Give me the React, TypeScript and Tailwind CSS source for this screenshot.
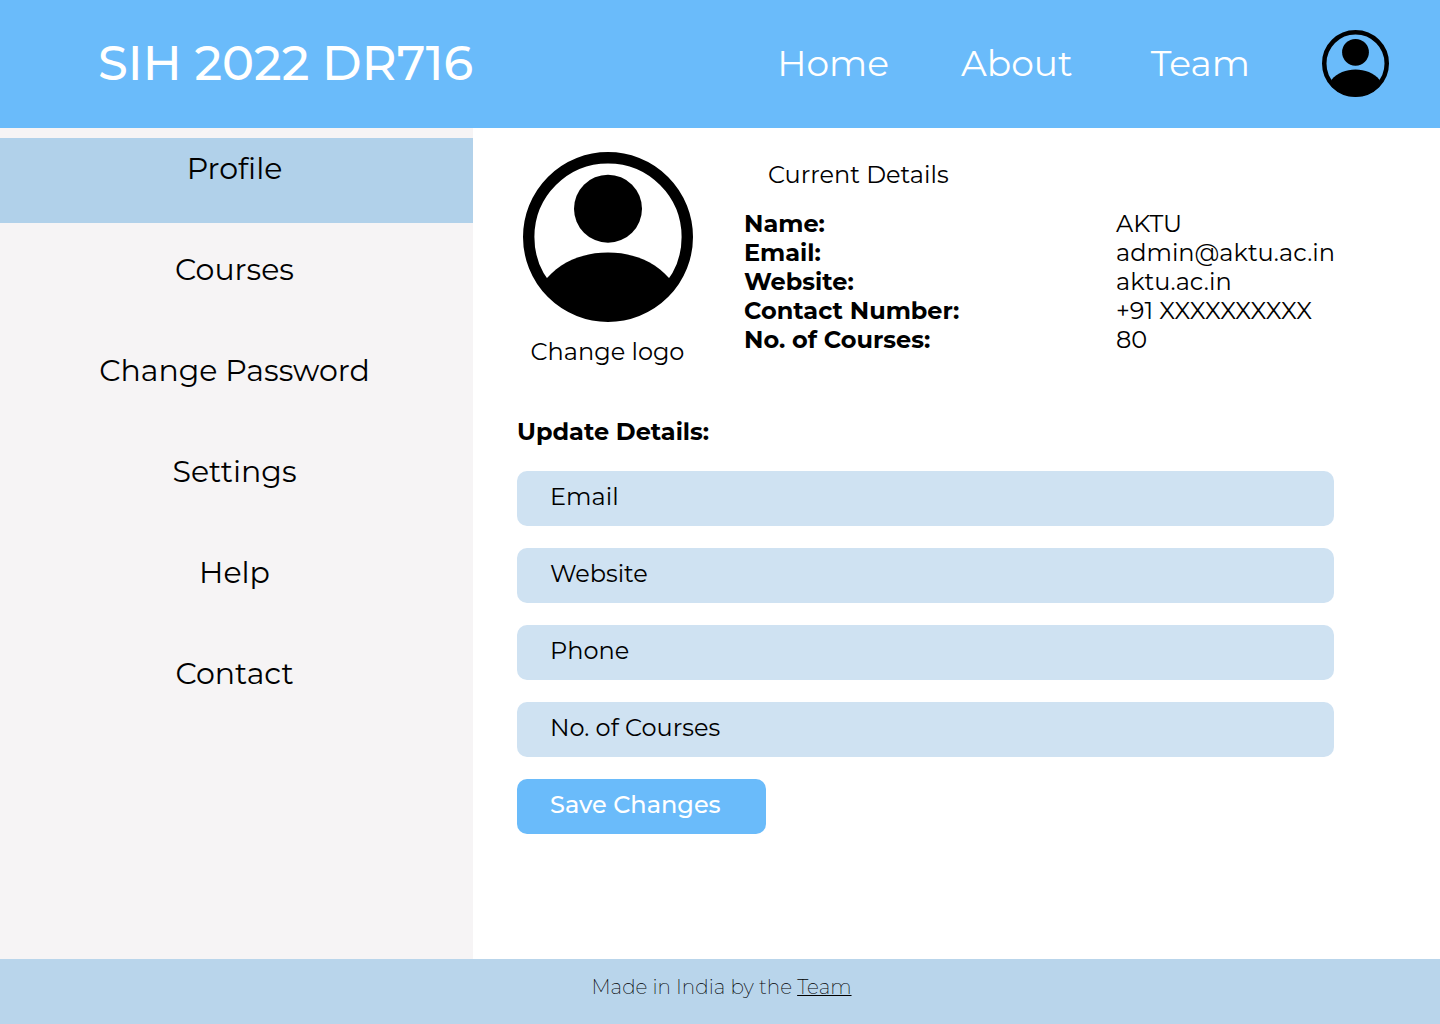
import React from "react";

function Avatar({ className }: { className: string }) {
  return (
    <svg viewBox="0 0 170 170" className={className} aria-hidden="true">
      <defs>
        <clipPath id="disc"><circle cx="85" cy="85" r="84" /></clipPath>
      </defs>
      <circle cx="85" cy="85" r="79.3" fill="none" stroke="#000" strokeWidth="11.4" />
      <circle cx="85" cy="56.7" r="34" />
      <path clipPath="url(#disc)" d="M24 126C39 109 61 100.500 85 100.500S131 109 146 126V170H24Z" />
    </svg>
  );
}

const menu = ["Profile", "Courses", "Change Password", "Settings", "Help", "Contact"];
const details = [
  ["Name:", "AKTU"],
  ["Email:", "admin@aktu.ac.in"],
  ["Website:", "aktu.ac.in"],
  ["Contact Number:", "+91 XXXXXXXXXX"],
  ["No. of Courses:", "80"],
];
const fields = ["Email", "Website", "Phone", "No. of Courses"];

export default function App() {
  return (
    <div className="flex min-h-screen flex-col bg-white font-['Montserrat','Inter',sans-serif] text-black [font-variant-ligatures:none]">
      <header className="flex h-32 items-center justify-between bg-[#6abbfa] pr-[51px] pb-0.5 pl-[98px] text-white">
        <h1 className="text-[48px] leading-none font-medium">SIH 2022 DR716</h1>
        <div className="flex items-center gap-[72px]">
          <nav className="flex items-center text-[36px]">
            <a href="#home" className="mr-[72px]">Home</a>
            <a href="#about" className="mr-[78px]">About</a>
            <a href="#team">Team</a>
          </nav>
          <button type="button" aria-label="Account"><Avatar className="size-[67px]" /></button>
        </div>
      </header>
      <div className="flex grow">
        <aside className="w-[473px] shrink-0 bg-[#f6f4f5] pt-[10px]">
          <nav className="flex flex-col gap-4 text-[30px]">
            {menu.map((m) => (
              <a key={m} href="#" className={m === "Profile" ? "flex h-[85px] justify-center bg-[#b1d1ea] pt-2 pr-1" : "flex h-[85px] justify-center pt-2 pr-1"}>{m}</a>
            ))}
          </nav>
        </aside>
        <main className="min-w-0 grow pt-6 pr-[106px] pl-11 text-[24px]">
          <div className="flex">
            <div className="flex w-[181px] shrink-0 flex-col items-center">
              <Avatar className="size-[170px]" />
              <button type="button" className="mt-3 whitespace-nowrap">Change logo</button>
            </div>
            <section className="ml-[46px] min-w-0 grow pt-[5px]">
              <h2 className="pl-6">Current Details</h2>
              <dl className="mt-4 leading-[29px]">
                {details.map(([k, v]) => (
                  <div key={k} className="flex"><dt className="w-[372px] shrink-0 font-bold">{k}</dt><dd className="whitespace-nowrap">{v}</dd></div>
                ))}
              </dl>
            </section>
          </div>
          <form className="mt-11 flex flex-col gap-[22px]">
            <h2 className="leading-[35px] font-bold">Update Details:</h2>
            {fields.map((f) => (
              <input key={f} aria-label={f} placeholder={f} className="h-[55px] rounded-[10px] bg-[#cfe2f2] px-[33px] pb-1 placeholder:text-black" />
            ))}
            <button type="button" className="h-[55px] w-[249px] rounded-[10px] bg-[#6abbfa] pb-1 pl-[33px] text-left font-medium text-white">Save Changes</button>
          </form>
        </main>
      </div>
      <footer className="flex h-[65px] justify-center bg-[#b9d5eb] pt-[13px] pl-[3px] text-[20px] font-extralight"><p>Made in India by the <a href="#team" className="underline decoration-1">Team</a></p></footer>
    </div>
  );
}
